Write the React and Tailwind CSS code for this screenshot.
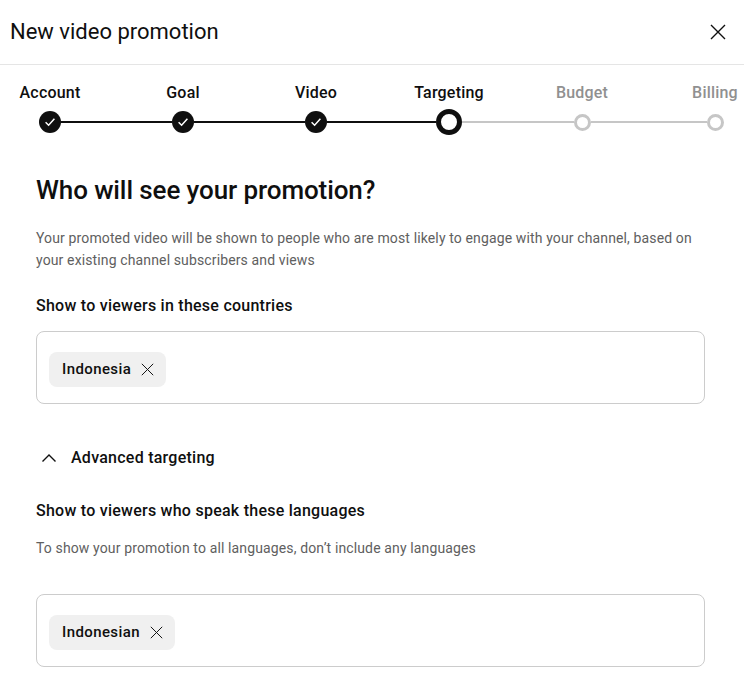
import React from 'react';

const steps = [
    { label: 'Account', state: 'done' },
    { label: 'Goal', state: 'done' },
    { label: 'Video', state: 'done' },
    { label: 'Targeting', state: 'current' },
    { label: 'Budget', state: 'todo' },
    { label: 'Billing', state: 'todo' },
];

const Close = ({ size = 16, stroke = 1.3, color = '#0f0f0f' }) => (
    <svg width={size} height={size} viewBox="0 0 16 16" fill="none" stroke={color} strokeWidth={stroke}>
        <path d="M1 1 L15 15 M15 1 L1 15" />
    </svg>
);

const StepDot = ({ state }) => {
    if (state === 'done') {
        return (
            <div className="w-[22px] h-[22px] rounded-full bg-[#0f0f0f] flex items-center justify-center">
                <svg width="14" height="14" viewBox="0 0 14 14" fill="none" stroke="#fff" strokeWidth="1.5">
                    <path d="M2.6 7.3 L5.6 10.2 L11.4 3.8" />
                </svg>
            </div>
        );
    }
    if (state === 'current') {
        return <div className="w-[26px] h-[26px] rounded-full border-[5px] border-[#0f0f0f] bg-white" />;
    }
    return <div className="w-[17px] h-[17px] rounded-full border-[3px] border-[#c6c6c6] bg-white" />;
};

const Chip = ({ label }) => (
    <div className="inline-flex items-center gap-[10px] h-[35px] pl-[13px] pr-[12px] rounded-lg bg-[#f0f0f0]">
        <span className="text-[15px] font-medium text-[#0f0f0f] tracking-[0.4px]">{label}</span>
        <Close size={13} stroke={1.2} />
    </div>
);

const App = () => {
    return (
        <div className="w-[744px] h-[694px] bg-white overflow-hidden font-['Roboto',sans-serif] text-[#0f0f0f]">
            {/* Header */}
            <div className="h-[65px] flex items-center justify-between pl-[10px] pr-[18px] border-b border-[#e5e5e5]">
                <h1 className="text-[22px] tracking-[0px] pb-[1px]">New video promotion</h1>
                <Close size={16} stroke={1.4} />
            </div>

            {/* Stepper */}
            <div className="flex ml-[-16.5px] pt-[16px]">
                {steps.map((s, i) => {
                    const leftDark = i <= 3;
                    const rightDark = i < 3;
                    return (
                        <div key={s.label} className="w-[133px] shrink-0 flex flex-col items-center">
                            <div className={`text-[16px] font-medium tracking-[0.2px] h-[22px] whitespace-nowrap ${s.state === 'todo' ? 'text-[#909090]' : 'text-[#0f0f0f]'}`}>
                                {s.label}
                            </div>
                            <div className="w-full h-[26px] mt-[6px] flex items-center">
                                <div className={`flex-1 h-[2px] ${i === 0 ? 'bg-transparent' : leftDark ? 'bg-[#0f0f0f]' : 'bg-[#c6c6c6]'}`} />
                                <StepDot state={s.state} />
                                <div className={`flex-1 h-[2px] ${i === steps.length - 1 ? 'bg-transparent' : rightDark ? 'bg-[#0f0f0f]' : 'bg-[#c6c6c6]'}`} />
                            </div>
                        </div>
                    );
                })}
            </div>

            {/* Body */}
            <div className="px-[36px] pr-[39px]">
                <h2 className="text-[26px] font-medium tracking-[-0.1px] mt-[39px] leading-[32px]">Who will see your promotion?</h2>
                <p className="text-[14px] leading-[22px] text-[#606060] tracking-[0.13px] mt-[21px]">
                    Your promoted video will be shown to people who are most likely to engage with your channel, based on your existing channel subscribers and views
                </p>

                <h3 className="text-[16px] font-medium tracking-[0.25px] mt-[23px] leading-[24px]">Show to viewers in these countries</h3>
                <div className="mt-[13px] h-[73px] border border-[#cccccc] rounded-[8px] px-[12px] pt-[4px] flex items-center">
                    <Chip label="Indonesia" />
                </div>

                <div className="flex items-center gap-[14px] mt-[41px] h-[26px] pl-[5px]">
                    <svg width="16" height="16" viewBox="0 0 16 16" fill="none" stroke="#0f0f0f" strokeWidth="1.4">
                        <path d="M1.5 11.5 L8 5 L14.5 11.5" />
                    </svg>
                    <span className="text-[16px] font-medium tracking-[0.25px]">Advanced targeting</span>
                </div>

                <h3 className="text-[16px] font-medium tracking-[0.25px] mt-[28px] leading-[24px]">Show to viewers who speak these languages</h3>
                <p className="text-[14px] leading-[22px] text-[#606060] tracking-[0.13px] mt-[14px]">
                    To show your promotion to all languages, don’t include any languages
                </p>
                <div className="mt-[35px] h-[73px] border border-[#cccccc] rounded-[8px] px-[12px] pt-[4px] flex items-center">
                    <Chip label="Indonesian" />
                </div>
            </div>
        </div>
    );
};

export default App;
